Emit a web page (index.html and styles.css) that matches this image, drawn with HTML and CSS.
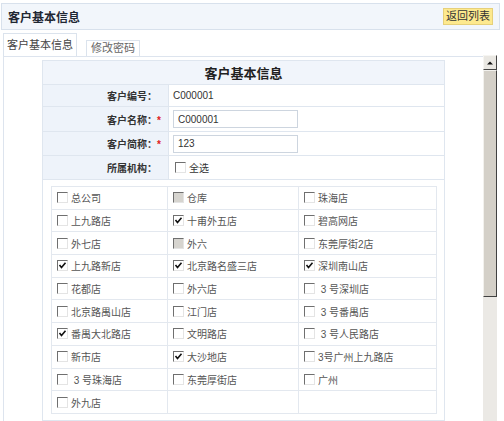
FILE: index.html
```html
<!DOCTYPE html>
<html lang="zh-CN">
<head>
<meta charset="utf-8">
<title>客户基本信息</title>
<link rel="stylesheet" href="styles.css">
</head>
<body>
<div class="header">
  <span class="header-title">客户基本信息</span>
  <button class="btn-back" type="button">返回列表</button>
</div>
<div class="main">
  <div class="content">
    <div class="tabs">
      <div class="tab tab-active">客户基本信息</div>
      <div class="tab">修改密码</div>
    </div>
    <div class="panel">
      <table class="form">
        <tr class="form-title"><th colspan="2">客户基本信息</th></tr>
        <tr class="row-code">
          <td class="lbl">客户编号：<span class="req"></span></td>
          <td class="val">C000001</td>
        </tr>
        <tr class="row-input">
          <td class="lbl">客户名称：<span class="req">*</span></td>
          <td class="val"><input class="txt" type="text" value="C000001"></td>
        </tr>
        <tr class="row-input">
          <td class="lbl">客户简称：<span class="req">*</span></td>
          <td class="val"><input class="txt" type="text" value="123"></td>
        </tr>
        <tr class="row-org">
          <td class="lbl">所属机构：<span class="req"></span></td>
          <td class="val"><span class="opt"><span class="cb"></span>全选</span></td>
        </tr>
        <tr>
          <td class="stores-cell" colspan="2">
            <table class="stores">
              <colgroup><col class="c1"><col class="c2"><col class="c3"></colgroup>
              <tr>
                <td><span class="opt"><span class="cb"></span>总公司</span></td>
                <td><span class="opt"><span class="cb cb-dis"></span>仓库</span></td>
                <td><span class="opt"><span class="cb"></span>珠海店</span></td>
              </tr>
              <tr>
                <td><span class="opt"><span class="cb"></span>上九路店</span></td>
                <td><span class="opt"><span class="cb"><svg viewBox="0 0 9 9"><path d="M1.5 4 L3.5 6.5 L7.5 1.8"/></svg></span>十甫外五店</span></td>
                <td><span class="opt"><span class="cb"></span>碧高网店</span></td>
              </tr>
              <tr>
                <td><span class="opt"><span class="cb"></span>外七店</span></td>
                <td><span class="opt"><span class="cb cb-dis"></span>外六</span></td>
                <td><span class="opt"><span class="cb"></span>东莞厚街2店</span></td>
              </tr>
              <tr>
                <td><span class="opt"><span class="cb"><svg viewBox="0 0 9 9"><path d="M1.5 4 L3.5 6.5 L7.5 1.8"/></svg></span>上九路新店</span></td>
                <td><span class="opt"><span class="cb"><svg viewBox="0 0 9 9"><path d="M1.5 4 L3.5 6.5 L7.5 1.8"/></svg></span>北京路名盛三店</span></td>
                <td><span class="opt"><span class="cb"><svg viewBox="0 0 9 9"><path d="M1.5 4 L3.5 6.5 L7.5 1.8"/></svg></span>深圳南山店</span></td>
              </tr>
              <tr>
                <td><span class="opt"><span class="cb"></span>花都店</span></td>
                <td><span class="opt"><span class="cb"></span>外六店</span></td>
                <td><span class="opt"><span class="cb"></span>&nbsp;3 号深圳店</span></td>
              </tr>
              <tr>
                <td><span class="opt"><span class="cb"></span>北京路禺山店</span></td>
                <td><span class="opt"><span class="cb"></span>江门店</span></td>
                <td><span class="opt"><span class="cb"></span>&nbsp;3 号番禺店</span></td>
              </tr>
              <tr>
                <td><span class="opt"><span class="cb"><svg viewBox="0 0 9 9"><path d="M1.5 4 L3.5 6.5 L7.5 1.8"/></svg></span>番禺大北路店</span></td>
                <td><span class="opt"><span class="cb"></span>文明路店</span></td>
                <td><span class="opt"><span class="cb"></span>&nbsp;3 号人民路店</span></td>
              </tr>
              <tr>
                <td><span class="opt"><span class="cb"></span>新市店</span></td>
                <td><span class="opt"><span class="cb"><svg viewBox="0 0 9 9"><path d="M1.5 4 L3.5 6.5 L7.5 1.8"/></svg></span>大沙地店</span></td>
                <td><span class="opt"><span class="cb"></span>3号广州上九路店</span></td>
              </tr>
              <tr>
                <td><span class="opt"><span class="cb"></span>&nbsp;3 号珠海店</span></td>
                <td><span class="opt"><span class="cb"></span>东莞厚街店</span></td>
                <td><span class="opt"><span class="cb"></span>广州</span></td>
              </tr>
              <tr>
                <td><span class="opt"><span class="cb"></span>外九店</span></td>
                <td></td>
                <td></td>
              </tr>
            </table>
          </td>
        </tr>
      </table>
    </div>
  </div>
  <div class="scrollbar">
    <div class="sb-up"><svg viewBox="0 0 12 12"><path d="M3 7.5 L6 4.5 L9 7.5 Z"/></svg></div>
    <div class="sb-thumb"></div>
    <div class="sb-track"></div>
  </div>
</div>
</body>
</html>
```

FILE: styles.css
```css
* { box-sizing: border-box; }

html, body {
  margin: 0;
  padding: 0;
}

body {
  width: 504px;
  height: 421px;
  overflow: hidden;
  background: #ffffff;
  color: #333333;
  font-family: "Liberation Sans", "Noto Sans CJK SC", sans-serif;
  font-size: 10px;
}

.header {
  margin: 3px 4px 0 1px;
  height: 27px;
  display: flex;
  align-items: center;
  justify-content: space-between;
  padding: 0 6px 0 6px;
  background: #f2f6fb;
  border: 1px solid #d8e1ec;
}

.header-title {
  font-size: 12px;
  font-weight: bold;
  color: #1f2733;
}

.btn-back {
  width: 50px;
  height: 17px;
  margin: 0;
  padding: 0;
  background: #fde98e;
  border: 1px solid #e6d07a;
  font-family: "Liberation Sans", "Noto Sans CJK SC", sans-serif;
  font-size: 11px;
  line-height: 15px;
  color: #333333;
}

.main {
  display: flex;
  margin-left: 3px;
  height: 391px;
}

.content {
  width: 480px;
  display: flex;
  flex-direction: column;
}

.tabs {
  height: 26px;
  display: flex;
  align-items: flex-end;
  gap: 9px;
}

.tab {
  height: 16px;
  padding: 0 4px;
  border: 1px solid #dbe3ed;
  border-bottom: none;
  background: #ffffff;
  color: #666666;
  font-size: 11px;
  line-height: 15px;
  white-space: nowrap;
}

.tab-active {
  height: 23px;
  padding: 0 3px;
  line-height: 22px;
  color: #444444;
}

.panel {
  flex: 1;
  border-top: 1px solid #dde4ee;
  border-left: 1px solid #dde4ee;
  padding-top: 3px;
  overflow: hidden;
}

.form {
  width: 402px;
  margin: 0 auto;
  border-collapse: collapse;
}

.form > tbody > tr > th,
.form > tbody > tr > td {
  border: 1px solid #dfe6ef;
  padding: 0;
}

.form-title th {
  height: 24px;
  background: #f1f5fb;
  font-size: 13px;
  font-weight: bold;
  color: #222222;
  text-align: center;
}

.row-code td { height: 22px; }
.row-input td { height: 25px; }
.row-input + .row-input td { height: 24px; }
.row-org td { height: 24px; }

.form .lbl {
  width: 126px;
  background: #eef3fa;
  text-align: right;
  padding-right: 3px;
  font-weight: bold;
  color: #333333;
}

.req {
  display: inline-block;
  width: 8px;
  text-align: left;
  color: #e02020;
  font-weight: bold;
}

.form .val {
  padding-left: 4px;
  color: #333333;
}

.txt {
  display: block;
  width: 125px;
  height: 18px;
  margin: 0;
  padding: 0 4px;
  border: 1px solid #cdd5df;
  background: #ffffff;
  font-family: "Liberation Sans", sans-serif;
  font-size: 10px;
  color: #333333;
}

.opt {
  display: inline-flex;
  align-items: center;
  gap: 3px;
  color: #555555;
}

.row-org .opt {
  color: #333333;
  padding-left: 2px;
}

.cb {
  width: 11px;
  height: 11px;
  display: inline-flex;
  align-items: center;
  justify-content: center;
  background: #ffffff;
  border-top: 1px solid #6f6f6f;
  border-left: 1px solid #6f6f6f;
  border-right: 1px solid #e4e4e4;
  border-bottom: 1px solid #e4e4e4;
  flex: none;
}

.cb svg {
  width: 9px;
  height: 9px;
}

.cb svg path {
  fill: none;
  stroke: #111111;
  stroke-width: 1.6;
}

.cb-dis {
  background: #d6d4cf;
}

.form .stores-cell {
  padding: 6px 7px 6px 8px;
  background: #ffffff;
}

.stores {
  width: 385px;
  border-collapse: collapse;
  table-layout: fixed;
}

.stores .c1 { width: 116px; }
.stores .c2 { width: 131px; }
.stores .c3 { width: 138px; }

.stores td {
  height: 22.7px;
  padding: 0 0 0 5px;
  border: 1px solid #e3e8ef;
  white-space: nowrap;
}

.scrollbar {
  width: 14px;
  margin-top: 25px;
  display: flex;
  flex-direction: column;
  background: #ebe9e4;
}

.sb-up {
  height: 15px;
  display: flex;
  align-items: center;
  justify-content: center;
  background: #e9e7e2;
  border-top: 1px solid #f6f5f2;
  border-left: 1px solid #f6f5f2;
  border-right: 1px solid #444444;
  border-bottom: 1px solid #444444;
}

.sb-up svg {
  width: 12px;
  height: 12px;
}

.sb-up svg path {
  fill: #111111;
}

.sb-thumb {
  height: 227px;
  background: #d4d0c8;
  border-top: 1px solid #f2f1ed;
  border-left: 1px solid #f2f1ed;
  border-right: 1px solid #404040;
  border-bottom: 1px solid #404040;
}

.sb-track {
  flex: 1;
  background: #ebe9e5;
}
```
